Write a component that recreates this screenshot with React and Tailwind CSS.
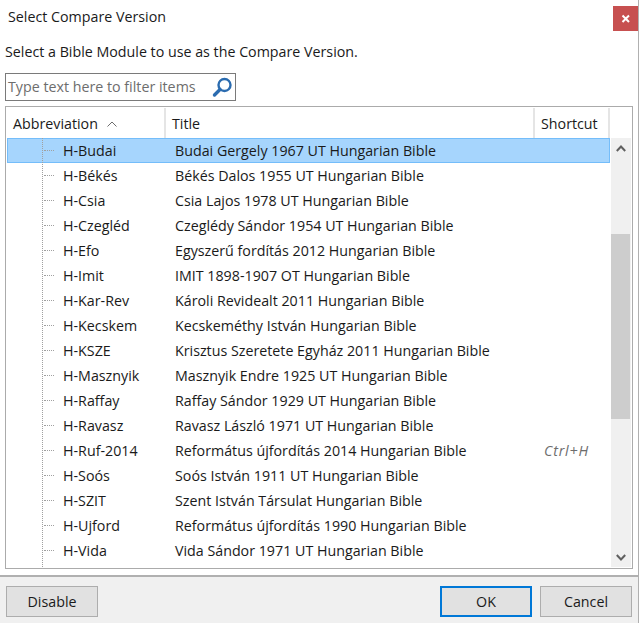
import React from "react";

const rows = [
  ["H-Budai", "Budai Gergely 1967 UT Hungarian Bible"],
  ["H-Békés", "Békés Dalos 1955 UT Hungarian Bible"],
  ["H-Csia", "Csia Lajos 1978 UT Hungarian Bible"],
  ["H-Czegléd", "Czeglédy Sándor 1954 UT Hungarian Bible"],
  ["H-Efo", "Egyszerű fordítás 2012 Hungarian Bible"],
  ["H-Imit", "IMIT 1898-1907 OT Hungarian Bible"],
  ["H-Kar-Rev", "Károli Revidealt 2011 Hungarian Bible"],
  ["H-Kecskem", "Kecskeméthy István Hungarian Bible"],
  ["H-KSZE", "Krisztus Szeretete Egyház 2011 Hungarian Bible"],
  ["H-Masznyik", "Masznyik Endre 1925 UT Hungarian Bible"],
  ["H-Raffay", "Raffay Sándor 1929 UT Hungarian Bible"],
  ["H-Ravasz", "Ravasz László 1971 UT Hungarian Bible"],
  ["H-Ruf-2014", "Református újfordítás 2014 Hungarian Bible", "Ctrl+H"],
  ["H-Soós", "Soós István 1911 UT Hungarian Bible"],
  ["H-SZIT", "Szent István Társulat Hungarian Bible"],
  ["H-Ujford", "Református újfordítás 1990 Hungarian Bible"],
  ["H-Vida", "Vida Sándor 1971 UT Hungarian Bible"],
];

function Row({ r, i }) {
  const sel = i === 0;
  return (
    <div className={`flex h-[25px] items-center ${sel ? "bg-[#a6d5fd] outline outline-1 -outline-offset-1 outline-[#74bdfa]" : ""}`}>
      <div className="w-[37px] shrink-0" />
      <div className="w-[10px] shrink-0 border-t border-dotted border-[#a0a0a0]" />
      <div className="w-[121px] shrink-0 pl-[9px]">{r[0]}</div>
      <div className="w-[369px] shrink-0">{r[1]}</div>
      <div className="italic tracking-[0.8px] text-[#6d6d6d]">{r[2]}</div>
    </div>
  );
}

export default function App() {
  return (
    <div className="flex h-[623px] w-[639px] flex-col overflow-hidden border-r border-[#b0b0b0] bg-white text-[14.25px] text-[#1a1a1a] [font-family:'Open_Sans','Noto_Sans',sans-serif]">
      <div className="flex h-[31px] shrink-0 items-start justify-between pl-[8px] pt-[6px]">
        <div className="leading-[22px]">Select Compare Version</div>
        <div className="flex h-[25px] w-[25px] items-center justify-center bg-[#c75050]">
          <svg width="10" height="10" viewBox="0 0 10 10"><path d="M1.500 1.500 8 8M8 1.500 1.500 8" stroke="#fff" strokeWidth="2" /></svg>
        </div>
      </div>
      <div className="pl-[5px] pt-[10px] leading-[22px]">Select a Bible Module to use as the Compare Version.</div>
      <div className="ml-[5px] mt-[10px] flex h-[28px] w-[231px] shrink-0 items-center justify-between border border-[#7a7a7a] pl-[2px] pr-[1px] text-[#6d6d6d]">
        <span>Type text here to filter items</span>
        <svg width="22" height="22" viewBox="0 0 22 22" fill="none">
          <circle cx="12.500" cy="9" r="6" stroke="#2b6cb0" strokeWidth="2.400" />
          <path d="M8 13.500 2.500 19" stroke="#2b6cb0" strokeWidth="3.400" strokeLinecap="round" />
        </svg>
      </div>
      <div className="ml-[5px] mt-[5px] flex h-[463px] w-[628px] shrink-0 flex-col border border-[#ababab] p-[1px]">
        <div className="flex h-[30px] shrink-0 items-center">
          <div className="flex h-full w-[159px] shrink-0 items-center border-r-2 border-[#e5e5e5] pl-[6px] pt-[1px]">
            Abbreviation
            <svg className="ml-[9px]" width="10" height="6" viewBox="0 0 10 6" fill="none"><path d="M.5 5.500 5 1l4.500 4.500" stroke="#6d6d6d" /></svg>
          </div>
          <div className="flex h-full w-[369px] shrink-0 items-center border-r-2 border-[#e5e5e5] pl-[6px] pt-[1px]">Title</div>
          <div className="flex h-full w-[75px] shrink-0 items-center border-r-2 border-[#e5e5e5] pl-[6px] pt-[1px]">Shortcut</div>
        </div>
        <div className="flex min-h-0 flex-1">
          <div className="relative w-[603px] shrink-0">
            <div className="absolute bottom-0 left-[35px] top-0 z-10 border-l border-dotted border-[#a0a0a0]" />
            {rows.map((r, i) => <Row key={r[0]} r={r} i={i} />)}
          </div>
          <div className="ml-[1px] flex w-[20px] shrink-0 flex-col bg-[#f0f0f0]">
            <div className="flex h-[20px] items-center justify-center pt-[1px]">
              <svg width="10" height="7" viewBox="0 0 10 7" fill="none"><path d="M.8 6 5 1.500 9.200 6" stroke="#606060" strokeWidth="2" /></svg>
            </div>
            <div className="h-[76px]" />
            <div className="mr-[1px] h-[185px] bg-[#cdcdcd]" />
            <div className="flex-1" />
            <div className="flex h-[20px] items-center justify-center">
              <svg width="10" height="7" viewBox="0 0 10 7" fill="none"><path d="M.8 1 5 5.500 9.200 1" stroke="#606060" strokeWidth="2" /></svg>
            </div>
          </div>
        </div>
      </div>
      <div className="mt-[6px] flex flex-1 items-start justify-between border-t-2 border-[#b0b0b0] bg-[#f0f0f0] pl-[6px] pr-[6px] pt-[9px]">
        <button className="h-[31px] w-[92px] border border-[#adadad] bg-[#e1e1e1]">Disable</button>
        <div className="flex gap-[8px]">
          <button className="h-[31px] w-[92px] border-2 border-[#0078d7] bg-[#e1e1e1]">OK</button>
          <button className="h-[31px] w-[92px] border border-[#adadad] bg-[#e1e1e1]">Cancel</button>
        </div>
      </div>
    </div>
  );
}
